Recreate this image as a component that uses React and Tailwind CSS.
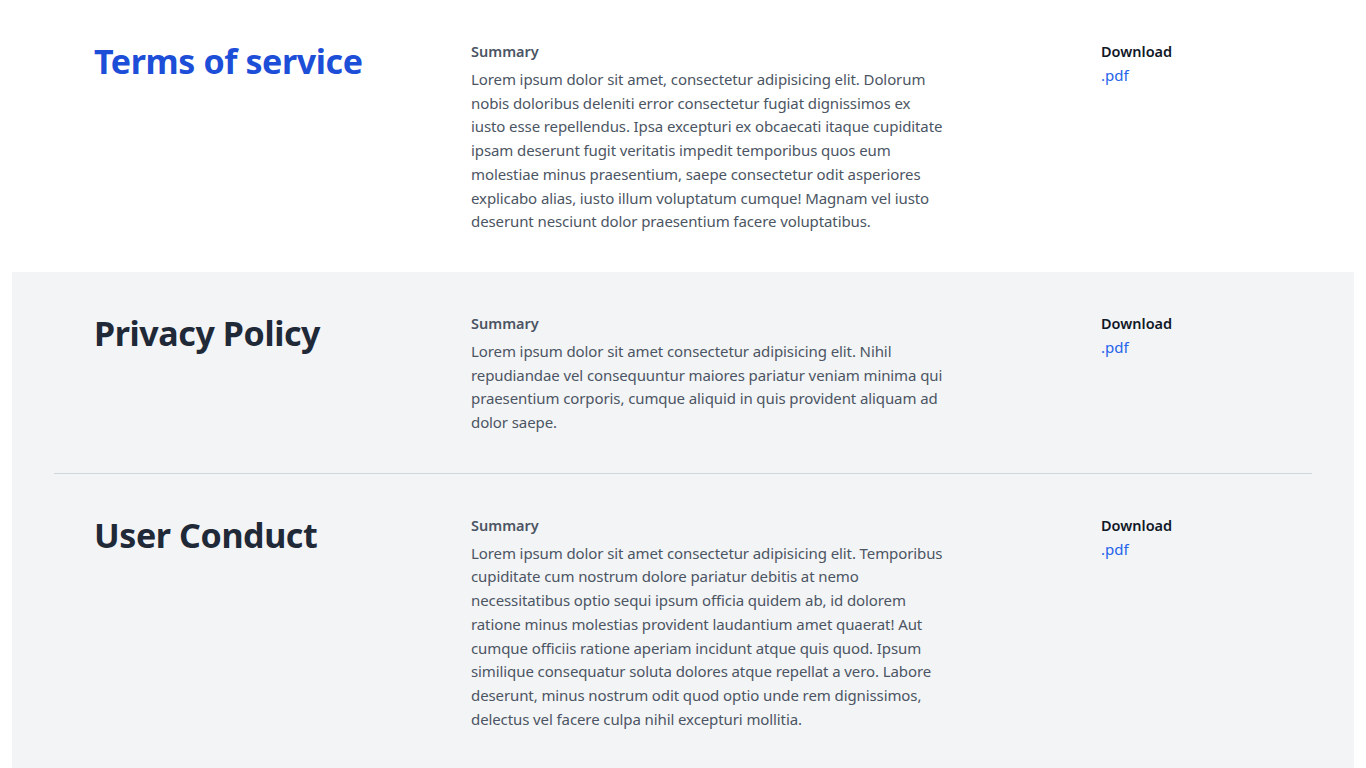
import React from "react";

const sections = [
  {
    title: "Terms of service",
    highlight: true,
    summary:
      "Lorem ipsum dolor sit amet, consectetur adipisicing elit. Dolorum nobis doloribus deleniti error consectetur fugiat dignissimos ex iusto esse repellendus. Ipsa excepturi ex obcaecati itaque cupiditate ipsam deserunt fugit veritatis impedit temporibus quos eum molestiae minus praesentium, saepe consectetur odit asperiores explicabo alias, iusto illum voluptatum cumque! Magnam vel iusto deserunt nesciunt dolor praesentium facere voluptatibus.",
  },
  {
    title: "Privacy Policy",
    summary:
      "Lorem ipsum dolor sit amet consectetur adipisicing elit. Nihil repudiandae vel consequuntur maiores pariatur veniam minima qui praesentium corporis, cumque aliquid in quis provident aliquam ad dolor saepe.",
  },
  {
    title: "User Conduct",
    summary:
      "Lorem ipsum dolor sit amet consectetur adipisicing elit. Temporibus cupiditate cum nostrum dolore pariatur debitis at nemo necessitatibus optio sequi ipsum officia quidem ab, id dolorem ratione minus molestias provident laudantium amet quaerat! Aut cumque officiis ratione aperiam incidunt atque quis quod. Ipsum similique consequatur soluta dolores atque repellat a vero. Labore deserunt, minus nostrum odit quod optio unde rem dignissimos, delectus vel facere culpa nihil excepturi mollitia.",
  },
];

const Section = ({ title, summary, highlight, divider }) => (
  <div className={`flex px-10 pt-[39px] pb-[38px] ${divider ? "border-b border-gray-300" : ""}`}>
    <div className="w-[377px] shrink-0">
      <h2
        className={`text-[34px] leading-[44px] tracking-[-0.4px] font-bold ${
          highlight ? "text-[#1d4ed8]" : "text-[#1f2937]"
        }`}
      >
        {title}
      </h2>
    </div>
    <div className="w-[472px] shrink-0">
      <p className="text-[14.5px] leading-6 font-semibold text-[#4b5563]">Summary</p>
      <p className="mt-[5px] text-[15px] leading-[23.7px] tracking-[-0.1px] text-[#4b5563]">{summary}</p>
    </div>
    <div className="ml-[158px]">
      <p className="text-[14.5px] leading-6 font-semibold text-[#111827]">Download</p>
      <a href="#" className="block text-[15px] leading-6 text-[#2563eb]">
        .pdf
      </a>
    </div>
  </div>
);

export default function App() {
  return (
    <div className="min-h-screen bg-white font-['Noto_Sans',sans-serif]">
      <div className="px-[54px]">
        <Section {...sections[0]} />
      </div>
      <div className="mx-3 bg-[#f3f4f6] px-[42px]">
        <Section {...sections[1]} divider />
        <Section {...sections[2]} />
      </div>
    </div>
  );
}
